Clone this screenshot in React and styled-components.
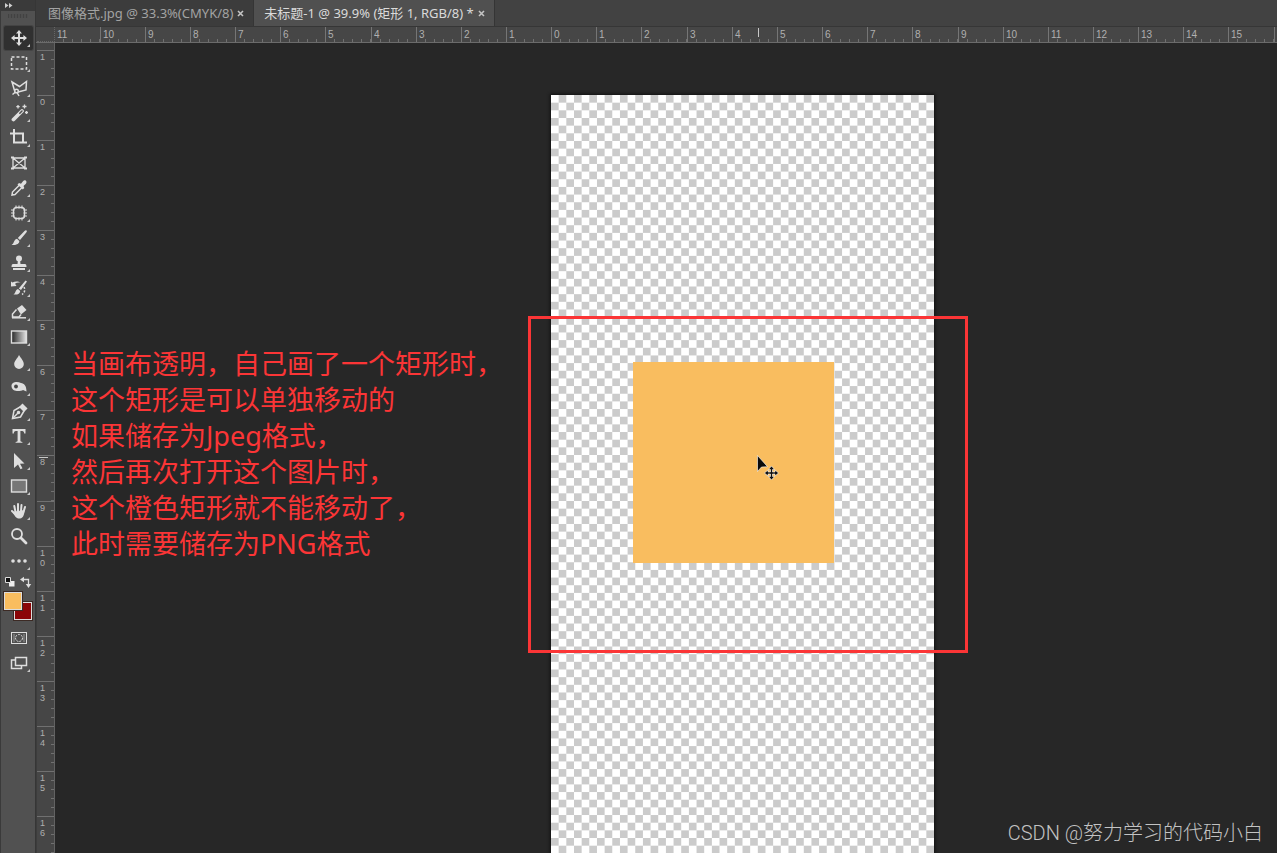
import React, { useEffect, useState } from "react";
import styled, { createGlobalStyle, css } from "styled-components";

const GlobalStyle = createGlobalStyle`
  * { box-sizing: border-box; }
  html, body, #root { height: 100%; }
  body {
    margin: 0;
    background: #272727;
    font-family: "Noto Sans", "Noto Sans CJK SC", sans-serif;
    overflow: hidden;
  }
  button { font: inherit; color: inherit; border: 0; padding: 0; background: none; }
`;

const Window = styled.div`
  display: flex;
  min-height: 100vh;
  background: #272727;
`;

const Toolbar = styled.aside`
  flex: none;
  width: 36px;
  background: #515151;
  border-left: 1px solid #3a3a3a;
  border-right: 1px solid #363636;
`;

const ExpandButton = styled.button`
  display: flex;
  width: 100%;
  height: 11px;
  padding-left: 4px;
  align-items: center;
  background: #3a3a3a;
`;

const Grip = styled.div`
  width: 20px;
  height: 4px;
  margin: 3px auto 8px;
  background: repeating-linear-gradient(90deg, #424242 0 1px, #4e4e4e 1px 3px);
`;

const ToolList = styled.div`
  display: flex;
  flex-direction: column;
  gap: 1px;
`;

const Tool = styled.button`
  position: relative;
  display: flex;
  width: 29px;
  height: 24px;
  margin-left: 3px;
  align-items: center;
  justify-content: center;
  border-radius: 2px;
  color: #dedede;
  ${(p) => p.$active && css`background: #303030; box-shadow: 0 0 0 1px #444;`}
  ${(p) => p.$more && css`
    &::after {
      content: "";
      position: absolute;
      right: 3px;
      bottom: 3px;
      border-left: 3px solid transparent;
      border-bottom: 3px solid #c8c8c8;
    }
  `}
  svg { display: block; margin-left: 1px; }
`;

const TightList = styled(ToolList)`
  margin-top: -1px;
`;

const SwatchActions = styled.div`
  display: flex;
  height: 12px;
  padding: 0 3px 0 3px;
  justify-content: space-between;
  align-items: center;
  margin-top: 3px;
`;

const MiniButton = styled.button`
  display: flex;
  width: 12px;
  height: 12px;
  color: #dedede;
`;

const Swatches = styled.div`
  display: grid;
  width: 28px;
  height: 28px;
  margin: 4px 0 6px 3px;
`;

const Swatch = styled.button`
  grid-area: 1 / 1;
  width: 18px;
  height: 18px;
  background: ${(p) => p.$color};
  border: 1px solid #dcdcdc;
  justify-self: ${(p) => p.$place};
  align-self: ${(p) => p.$place};
  z-index: ${(p) => (p.$place === "start" ? 1 : 0)};
  box-shadow: 0 0 0 1px #3c2a24;
`;

const Main = styled.main`
  display: flex;
  flex: 1;
  flex-direction: column;
  min-width: 0;
`;

const TabBar = styled.nav`
  display: flex;
  height: 26px;
  background: #424242;
`;

const Tab = styled.div`
  display: flex;
  align-items: center;
  gap: 3px;
  padding: 0 8px 0 ${(p) => (p.$active ? 10 : 12)}px;
  font-size: 13px;
  line-height: 26px;
  white-space: nowrap;
  color: ${(p) => (p.$active ? "#dadada" : "#a3a3a3")};
  background: ${(p) => (p.$active ? "#505050" : "#3c3c3c")};
  border-right: 1px solid #353535;
`;

const TabTitle = styled.button`
  height: 26px;
  white-space: nowrap;
`;

const CloseButton = styled.button`
  display: flex;
  width: 9px;
  height: 9px;
  align-items: center;
  justify-content: center;
  color: #c4c4c4;
`;

const RulerRow = styled.div`
  display: flex;
  height: 17px;
  background: #464646;
  border-top: 1px solid #363636;
  border-bottom: 1px solid #6b6b6b;
  overflow: hidden;
`;

const RulerCorner = styled.div`
  flex: none;
  width: 18px;
  margin-left: 1px;
  border-right: 1px dotted #666;
  border-bottom: 1px dotted #666;
`;

const RulerTrack = styled.div`
  position: relative;
  display: flex;
  flex: 1;
  min-width: 0;
  overflow: hidden;
`;

const TopUnit = styled.div`
  flex: none;
  width: ${(p) => p.$size}px;
  padding-left: 2px;
  font-family: "Liberation Sans", sans-serif;
  font-size: 10px;
  line-height: 16px;
  color: #b0b0b0;
  border-left: ${(p) => (p.$first ? 0 : 1)}px solid #757575;
  background: repeating-linear-gradient(90deg, transparent 0 8px, #707070 8px 9px) left bottom / 100% 3px no-repeat;
`;

const TopMarker = styled.span`
  position: absolute;
  left: 703px;
  top: 1px;
  width: 1px;
  height: 9px;
  background: #c8c8c8;
`;

const Workspace = styled.div`
  display: flex;
  flex: 1;
  min-height: 0;
`;

const SideRuler = styled.div`
  position: relative;
  flex: none;
  width: 19px;
  height: calc(100vh - 43px);
  padding-top: 7px;
  background: #464646;
  border-left: 1px solid #3c3c3c;
  border-right: 1px solid #626262;
  overflow: hidden;
`;

const SideUnit = styled.div`
  height: ${(p) => p.$size}px;
  padding: 1px 0 0 3px;
  font-family: "Liberation Sans", sans-serif;
  font-size: 9px;
  line-height: 10px;
  color: #b0b0b0;
  border-top: 1px solid #707070;
  background: repeating-linear-gradient(180deg, transparent 0 8px, #707070 8px 9px) right top / 3px 100% no-repeat;
`;

const Digit = styled.span`
  display: block;
  width: 6px;
`;

const SideMarker = styled.span`
  position: absolute;
  left: 2px;
  top: 414px;
  width: 9px;
  height: 1px;
  background: #c8c8c8;
`;

const Stage = styled.section`
  position: relative;
  flex: 1;
  height: calc(100vh - 43px);
  overflow: hidden;
  background: #272727;
`;

const Artboard = styled.div`
  position: absolute;
  left: 496px;
  top: 52px;
  width: 383px;
  bottom: 0;
  box-shadow: 0 0 3px 1px #111;
  background: #fff;
  svg { display: block; width: 100%; height: 100%; }
`;

const OrangeShape = styled.div`
  position: absolute;
  left: 578px;
  top: 319px;
  width: 201px;
  height: 201px;
  background: #f9bd5f;
`;

const Highlight = styled.div`
  position: absolute;
  left: 473px;
  top: 273px;
  width: 440px;
  height: 337px;
  border: 3px solid #fb3536;
`;

const Cursor = styled.svg`
  position: absolute;
  left: 700px;
  top: 411px;
`;

const Note = styled.p`
  position: absolute;
  left: 16px;
  top: 303px;
  margin: 0;
  font-size: 27px;
  line-height: 36px;
  white-space: pre;
  color: #fb3536;
`;

const Watermark = styled.div`
  position: absolute;
  right: 14px;
  bottom: 6px;
  font-family: Roboto, "Noto Sans CJK SC", sans-serif;
  font-size: 20px;
  font-weight: 300;
  line-height: 28px;
  white-space: nowrap;
  color: #c3c3c3;
`;

const line = { fill: "none", stroke: "currentColor", strokeWidth: 1.5 };

const tools = [
  { name: "移动工具", active: true, more: true, art: (
    <g fill="currentColor"><path d="M9 1l3 3.600H10v3.400h3.400V6L17 9l-3.600 3v-2H10v3.400h2L9 17l-3-3.600h2V10H4.600v2L1 9l3.600-3v2H8V4.600H6z" /></g>) },
  { name: "矩形选框工具", more: true, art: <rect x="1.500" y="3" width="15" height="12" {...line} strokeDasharray="3 2" /> },
  { name: "多边形套索工具", more: true, art: (
    <g {...line}><path d="M4.500 11.500L2 3l7.500 4.500L16.500 2.500l-.5 8.500-8 2" /><circle cx="6.500" cy="12" r="1.800" /><path d="M5.500 13l-3 2.500M7 13.500l2 3.500" /></g>) },
  { name: "魔棒工具", more: true, art: (
    <g><path d="M3.500 15.500L12 7" stroke="currentColor" strokeWidth="3.800" strokeLinecap="round" /><path d="M9.800 9.200L12 7" stroke="#515151" strokeWidth="1.500" strokeLinecap="round" /><path d="M8 1v3.400M6.300 2.700h3.400M14.500 .5v4M12.500 2.500h4M16.500 7v3M15 8.500h3" stroke="currentColor" strokeWidth="1.300" /></g>) },
  { name: "裁剪工具", more: true, art: <path d="M0 4.500h13V14M4 0v13.500h13" {...line} strokeWidth="2" /> },
  { name: "图框工具", art: (
    <g {...line}><path d="M3 4h12v10H3zM3 4l12 10M15 4L3 14" strokeWidth="1.300" /><path d="M1 3.500h3M14 3.500h3M1 14.500h3M14 14.500h3" strokeWidth="2" /></g>) },
  { name: "吸管工具", more: true, art: (
    <g><path d="M9.500 6L2.500 13l-.5 3 3-.5 7-7" {...line} /><path d="M7.500 5.500L9 4l2 .8L13.200 2c2-1.800 4.400.6 2.700 2.700L13.500 7l.8 2-1.500 1.500z" fill="currentColor" /></g>) },
  { name: "修补工具", more: true, art: (
    <g {...line}><rect x="3.500" y="3.500" width="11" height="11" rx="3" /><path d="M6 1.500v3M9 1.500v3M12 1.500v3M6 13.500v3M9 13.500v3M12 13.500v3M1 6h3.500M1 9h3.500M1 12h3.500M13.500 6H17M13.500 9H17M13.500 12H17" strokeWidth="1.100" /></g>) },
  { name: "画笔工具", more: true, art: (
    <g fill="currentColor"><path d="M16.500 1.500c.7.500.5 1-.2 2L10 11 7.800 9 14.500 2c.8-.8 1.400-1 2-.5zM7 9.700L9.300 12c.2 3-3.500 4.500-7.800 3.800C4.500 14.500 3.500 10.500 7 9.700z" /></g>) },
  { name: "仿制图章工具", more: true, art: (
    <g fill="currentColor"><circle cx="9" cy="4.500" r="3" /><path d="M8 6h2l.5 4H15c1 0 1.500 1 1.500 3h-15c0-2 .5-3 1.500-3h4.500zM3 14h12v2H3z" /></g>) },
  { name: "历史记录画笔工具", more: true, art: (
    <g fill="currentColor"><path d="M15.500 1.500l1.500 1L11 11 8.800 9.500zM8 10l2.200 2c0 2.800-3 4-6.700 3.500C6 14 5 11 8 10z" /><path d="M1 2.500l1.500 1C5 2 8.500 2 10.500 3.800 8.500 3.300 6.500 3.600 5 4.800L6.500 7 1 7.500z" /><path d="M14 8c1.500 3 .5 6-2 7.500" {...line} strokeDasharray="2 1.500" /></g>) },
  { name: "橡皮擦工具", more: true, art: (
    <g><path d="M7 5.500L12 2l4.500 5L11 11.500z" fill="currentColor" /><path d="M6.500 6.500L2.500 11v3h6.500l2-2.500" {...line} /><path d="M2 14.800h14" {...line} /></g>) },
  { name: "渐变工具", more: true, art: (
    <g><defs><linearGradient id="ramp"><stop stopColor="#262626" /><stop offset="1" stopColor="#e4e4e4" /></linearGradient></defs><rect x="1.500" y="3" width="15" height="12" fill="url(#ramp)" stroke="currentColor" strokeWidth="1.400" /></g>) },
  { name: "模糊工具", more: true, art: <path d="M9 2c2.500 4 4.800 6 4.800 9.200a4.800 4.800 0 01-9.600 0C4.200 8 7 6 9 2z" fill="currentColor" /> },
  { name: "减淡工具", more: true, art: (
    <g><path d="M1.500 8c0-4 5.500-5 9.500-3 3 .5 5.500 2.500 5.500 8.500L13 12c-3 1.500-11.500 2-11.500-4z" fill="currentColor" /><circle cx="6" cy="8.500" r="1.900" fill="#444" /></g>) },
  { name: "钢笔工具", more: true, art: (
    <g {...line}><path d="M2.500 15.500l1.500-8 6-3.500 4 4-3.500 6z" /><path d="M3 15l5-5" /><path d="M10.500 3.500l2-2 4 4-2 2z" fill="currentColor" /><circle cx="8.500" cy="9.500" r="1" fill="currentColor" /></g>) },
  { name: "横排文字工具", more: true, art: <path d="M2.500 2h13v4.500h-1.300C14 4.500 13.500 4 10.400 4v9.500c0 1 .6 1.300 2 1.400v.9H5.600v-.9c1.400-.1 2-.4 2-1.400V4C4.500 4 4 4.500 3.800 6.500H2.500z" fill="currentColor" /> },
  { name: "路径选择工具", more: true, art: <path d="M4 1l10.500 10.500-4.500.3 2.500 4.500-2 1-2.500-4.800L4 16z" fill="currentColor" /> },
  { name: "矩形工具", more: true, art: <rect x="1.500" y="3" width="15" height="12" fill="#777" stroke="currentColor" strokeWidth="1.400" /> },
  { name: "抓手工具", more: true, art: (
    <g><path d="M5.500 10L4.300 4M8 9V2M11 9l.5-6M13.500 10L15 5M5 12L2 9" stroke="currentColor" strokeWidth="2" strokeLinecap="round" /><path d="M4.500 9.500L14.500 8c0 4-1 8-4.500 8.500-3.500.2-4.500-1.500-7-5.500z" fill="currentColor" /></g>) },
  { name: "缩放工具", art: (
    <g {...line}><circle cx="7" cy="7" r="5" strokeWidth="1.800" /><path d="M11 11l5 5" strokeWidth="2.800" strokeLinecap="round" /></g>) },
  { name: "编辑工具栏", more: true, art: <g fill="currentColor"><circle cx="3" cy="9" r="1.800" /><circle cx="9" cy="9" r="1.800" /><circle cx="15" cy="9" r="1.800" /></g> },
];

const modes = [
  { name: "快速蒙版", art: (
    <g {...line} strokeWidth="1"><rect x="1.500" y="3.500" width="15" height="11" /><circle cx="9" cy="9" r="3.500" strokeDasharray="2 1" /><path d="M4 5.500v7M14 5.500v7" strokeDasharray="1 1" /></g>) },
  { name: "屏幕模式", more: true, art: (
    <g {...line}><path d="M5 6H1.500v8.500h10V12" /><rect x="5.500" y="3.500" width="11" height="8" fill="#515151" /></g>) },
];

const UNIT_X = 45.15;
const UNIT_Y = 45.1;
const TOP_START = 55;
const SIDE_START = 50;
const LABEL_ROOM = 24;

const unitSize = (i, unit) => Math.floor((i + 1) * unit) - Math.floor(i * unit);

// Units that start inside the given length; a label is kept only where it fits.
const rulerUnits = (first, unit, length) =>
  Array.from({ length: Math.ceil(length / unit) }, (_, i) => ({
    label: i * unit + LABEL_ROOM <= length ? String(Math.abs(first + i)) : "",
    size: unitSize(i, unit),
  }));

const noteLines = [
  "当画布透明，自己画了一个矩形时，",
  "这个矩形是可以单独移动的",
  "如果储存为Jpeg格式，",
  "然后再次打开这个图片时，",
  "这个橙色矩形就不能移动了，",
  "此时需要储存为PNG格式",
];

function useWindowSize() {
  const read = () => ({ width: window.innerWidth, height: window.innerHeight });
  const [size, setSize] = useState(read);
  useEffect(() => {
    const update = () => setSize(read());
    window.addEventListener("resize", update);
    return () => window.removeEventListener("resize", update);
  }, []);
  return size;
}

function Icon({ children }) {
  return <svg width="18" height="18" viewBox="0 0 18 18" aria-hidden="true">{children}</svg>;
}

function ToolButton({ tool }) {
  return (
    <Tool type="button" aria-label={tool.name} $active={tool.active} $more={tool.more}>
      <Icon>{tool.art}</Icon>
    </Tool>
  );
}

function DocumentTab({ title, active }) {
  return (
    <Tab $active={active}>
      <TabTitle type="button">{title}</TabTitle>
      <CloseButton type="button" aria-label="关闭">
        <svg width="7" height="7" viewBox="0 0 7 7"><path d="M1 1l5 5M6 1L1 6" stroke="currentColor" strokeWidth="1.600" /></svg>
      </CloseButton>
    </Tab>
  );
}

function Checkerboard() {
  return (
    <svg viewBox="0 0 50 50" preserveAspectRatio="xMinYMin meet" aria-hidden="true">
      <defs>
        <pattern id="checks" width="2" height="2" patternUnits="userSpaceOnUse">
          <path d="M0 0h2v2H0z" fill="#fff" />
          <path d="M1 0h1v1H1zM0 1h1v1H0z" fill="#cbcbcb" />
        </pattern>
      </defs>
      <rect width="50" height="600" fill="url(#checks)" />
    </svg>
  );
}

export default function App() {
  const { width, height } = useWindowSize();
  return (
    <Window>
      <GlobalStyle />
      <Toolbar>
        <ExpandButton type="button" aria-label="展开">
          <svg width="8" height="5" viewBox="0 0 8 5"><path d="M0 0l3.500 2.500L0 5zM4 0l3.500 2.500L4 5z" fill="#cfcfcf" /></svg>
        </ExpandButton>
        <Grip />
        <ToolList>
          {tools.slice(0, 11).map((t) => <ToolButton key={t.name} tool={t} />)}
        </ToolList>
        <ToolList>
          {tools.slice(11, 16).map((t) => <ToolButton key={t.name} tool={t} />)}
        </ToolList>
        <ToolList>
          {tools.slice(16).map((t) => <ToolButton key={t.name} tool={t} />)}
        </ToolList>
        <SwatchActions>
          <MiniButton type="button" aria-label="默认颜色">
            <svg width="12" height="12" viewBox="0 0 12 12"><path d="M5 5h5.500v5.500H5z" fill="#eee" /><path d="M1.500 1.500h5v5h-5z" fill="#111" stroke="#ddd" /></svg>
          </MiniButton>
          <MiniButton type="button" aria-label="切换颜色">
            <svg width="12" height="12" viewBox="0 0 12 12"><path d="M3 3.500h5.500v5" fill="none" stroke="currentColor" strokeWidth="1.300" /><path d="M0 3.500L4 .8v5.400zM8.500 12L5.800 8h5.400z" fill="currentColor" /></svg>
          </MiniButton>
        </SwatchActions>
        <Swatches>
          <Swatch type="button" aria-label="前景色" $color="#f9bd5f" $place="start" />
          <Swatch type="button" aria-label="背景色" $color="#8b0507" $place="end" />
        </Swatches>
        <ToolList>
          {modes.map((t) => <ToolButton key={t.name} tool={t} />)}
        </ToolList>
      </Toolbar>
      <Main>
        <TabBar>
          <DocumentTab title="图像格式.jpg @ 33.3%(CMYK/8)" />
          <DocumentTab title="未标题-1 @ 39.9% (矩形 1, RGB/8) *" active />
        </TabBar>
        <RulerRow>
          <RulerCorner />
          <RulerTrack>
            {rulerUnits(-11, UNIT_X, width - TOP_START).map((u, i) => (
              <TopUnit key={i} $first={i === 0} $size={u.size}>{u.label}</TopUnit>
            ))}
            <TopMarker />
          </RulerTrack>
        </RulerRow>
        <Workspace>
          <SideRuler>
            {rulerUnits(-1, UNIT_Y, height - SIDE_START).map((u, i) => (
              <SideUnit key={i} $size={u.size}>
                {u.label.split("").map((d, k) => <Digit key={k}>{d}</Digit>)}
              </SideUnit>
            ))}
            <SideMarker />
          </SideRuler>
          <Stage>
            <Artboard><Checkerboard /></Artboard>
            <OrangeShape />
            <Highlight />
            <Cursor width="24" height="28" viewBox="0 0 24 28" aria-hidden="true">
              <path d="M2.500 1.500v16l4-4.500 6-.3z" fill="#0a0a0a" stroke="#fff" strokeWidth=".6" />
              <path d="M16.500 12l3 3.500h-2v2.500h2.500v-2l3.500 3-3.500 3v-2h-2.500v2.500h2l-3 3.500-3-3.500h2V20H13v2l-3.500-3 3.500-3v2h2.500v-2.500h-2z" fill="#111" stroke="#fff" strokeWidth=".6" />
            </Cursor>
            <Note>{noteLines.join("\n")}</Note>
            <Watermark>CSDN @努力学习的代码小白</Watermark>
          </Stage>
        </Workspace>
      </Main>
    </Window>
  );
}
